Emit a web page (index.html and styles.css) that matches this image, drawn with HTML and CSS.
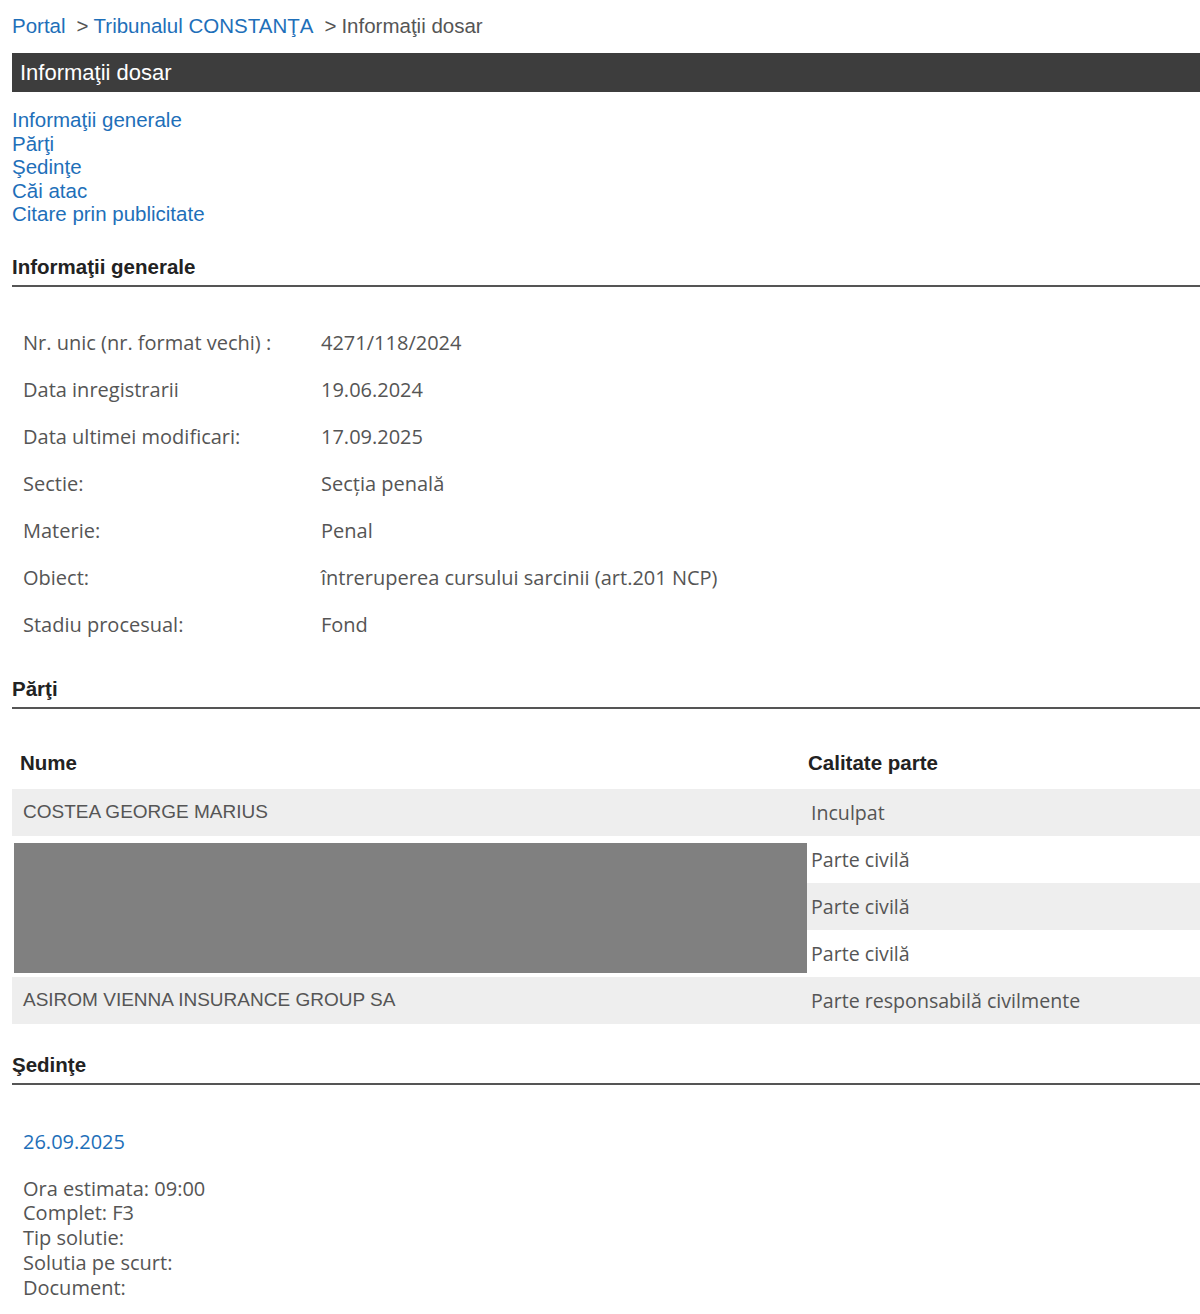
FILE: index.html
```html
<!DOCTYPE html>
<html lang="ro">
<head>
<meta charset="utf-8">
<title>Informaţii dosar</title>
<link rel="stylesheet" href="styles.css">
</head>
<body>
<div class="page">
  <nav class="crumbs">
    <a href="#">Portal</a><span class="sep">&gt;</span><a href="#">Tribunalul CONSTANŢA</a><span class="sep">&gt;</span><span class="current">Informaţii dosar</span>
  </nav>
  <div class="titlebar">Informaţii dosar</div>
  <ul class="toc">
    <li><a href="#">Informaţii generale</a></li>
    <li><a href="#">Părţi</a></li>
    <li><a href="#">Şedinţe</a></li>
    <li><a href="#">Căi atac</a></li>
    <li><a href="#">Citare prin publicitate</a></li>
  </ul>

  <h2 class="sect first">Informaţii generale</h2>
  <table class="info">
    <tr><td class="lbl">Nr. unic (nr. format vechi) :</td><td>4271/118/2024</td></tr>
    <tr><td class="lbl">Data inregistrarii</td><td>19.06.2024</td></tr>
    <tr><td class="lbl">Data ultimei modificari:</td><td>17.09.2025</td></tr>
    <tr><td class="lbl">Sectie:</td><td>Secţia penală</td></tr>
    <tr><td class="lbl">Materie:</td><td>Penal</td></tr>
    <tr><td class="lbl">Obiect:</td><td>întreruperea cursului sarcinii (art.201 NCP)</td></tr>
    <tr><td class="lbl">Stadiu procesual:</td><td>Fond</td></tr>
  </table>

  <h2 class="sect parti-h">Părţi</h2>
  <table class="parti">
    <thead>
      <tr><th class="c1">Nume</th><th class="c2">Calitate parte</th></tr>
    </thead>
    <tbody>
      <tr class="alt"><td class="c1">COSTEA GEORGE MARIUS</td><td class="c2">Inculpat</td></tr>
      <tr><td class="c1 redact" rowspan="3"><div class="blk"></div></td><td class="c2">Parte civilă</td></tr>
      <tr class="alt"><td class="c2">Parte civilă</td></tr>
      <tr><td class="c2">Parte civilă</td></tr>
      <tr class="alt"><td class="c1">ASIROM VIENNA INSURANCE GROUP SA</td><td class="c2">Parte responsabilă civilmente</td></tr>
    </tbody>
  </table>

  <h2 class="sect sed-h">Şedinţe</h2>
  <div class="sedinta">
    <div class="date">26.09.2025</div>
    <div class="det">
      <div>Ora estimata: 09:00</div>
      <div>Complet: F3</div>
      <div>Tip solutie:</div>
      <div>Solutia pe scurt:</div>
      <div>Document:</div>
    </div>
  </div>
</div>
</body>
</html>
```
FILE: styles.css
```css
html, body {
  margin: 0;
  padding: 0;
  background: #fff;
  overflow: hidden;
}
.page {
  margin-left: 12px;
  font-family: "Liberation Sans", Arial, sans-serif;
}
a { color: #1e6fb9; text-decoration: none; }
.crumbs {
  font-size: 20.5px;
  line-height: 24px;
  padding-top: 14px;
  height: 39px;
  color: #555;
}
.crumbs .sep { margin: 0 5px 0 11px; color: #555; }
.crumbs .current { color: #555; }
.titlebar {
  background: #3d3d3d;
  color: #fff;
  font-size: 22px;
  height: 39px;
  line-height: 39px;
  padding-left: 8px;
}
.toc {
  list-style: none;
  margin: 16px 0 0 0;
  padding: 0;
  font-size: 20.5px;
  line-height: 23.5px;
}
.sect {
  margin: 28px 0 0 0;
  font-size: 20.5px;
  font-weight: bold;
  color: #222;
  border-bottom: 2px solid #555;
  line-height: 24px;
  padding-bottom: 6px;
}
.sect.first { margin-top: 29px; }
.sect.parti-h { margin-top: 29px; }
.sect.sed-h { margin-top: 29px; }
.info {
  border-collapse: collapse;
  margin-top: 32px;
  font-family: "Open Sans", "Noto Sans", sans-serif;
  font-size: 20px;
  color: #555;
  width: 100%;
}
.info td {
  height: 47px;
  padding: 0 0 0 11px;
  vertical-align: middle;
}
.info td.lbl { width: 287px; }
.parti {
  margin-top: 29px;
  border-collapse: collapse;
  width: 100%;
  color: #555;
}
.parti th {
  text-align: left;
  font-size: 20.5px;
  color: #222;
  height: 51px;
  padding: 0 0 0 8px;
  vertical-align: middle;
}
.parti th.c1 { width: 787px; }
.parti th.c2 { padding-left: 1px; }
.parti td {
  height: 47px;
  padding: 0 0 0 11px;
  vertical-align: middle;
}
.parti td.c1 {
  font-family: "Liberation Sans", Arial, sans-serif;
  font-size: 19px;
}
.parti td.c2 {
  padding-left: 4px;
  font-family: "Open Sans", "Noto Sans", sans-serif;
  font-size: 19.6px;
}
.parti tr.alt td { background: #eeeeee; }
.parti td.redact {
  padding: 7px 0 3px 2px;
  background: #fff;
  vertical-align: top;
}
.parti .blk {
  background: #808080;
  height: 130px;
}
.sedinta {
  padding-left: 11px;
  font-family: "Open Sans", "Noto Sans", sans-serif;
  font-size: 20px;
  color: #555;
}
.sedinta .date {
  color: #1e6fb9;
  margin-top: 45px;
  line-height: 24px;
}
.sedinta .det {
  margin-top: 23px;
  line-height: 24.75px;
}
```
